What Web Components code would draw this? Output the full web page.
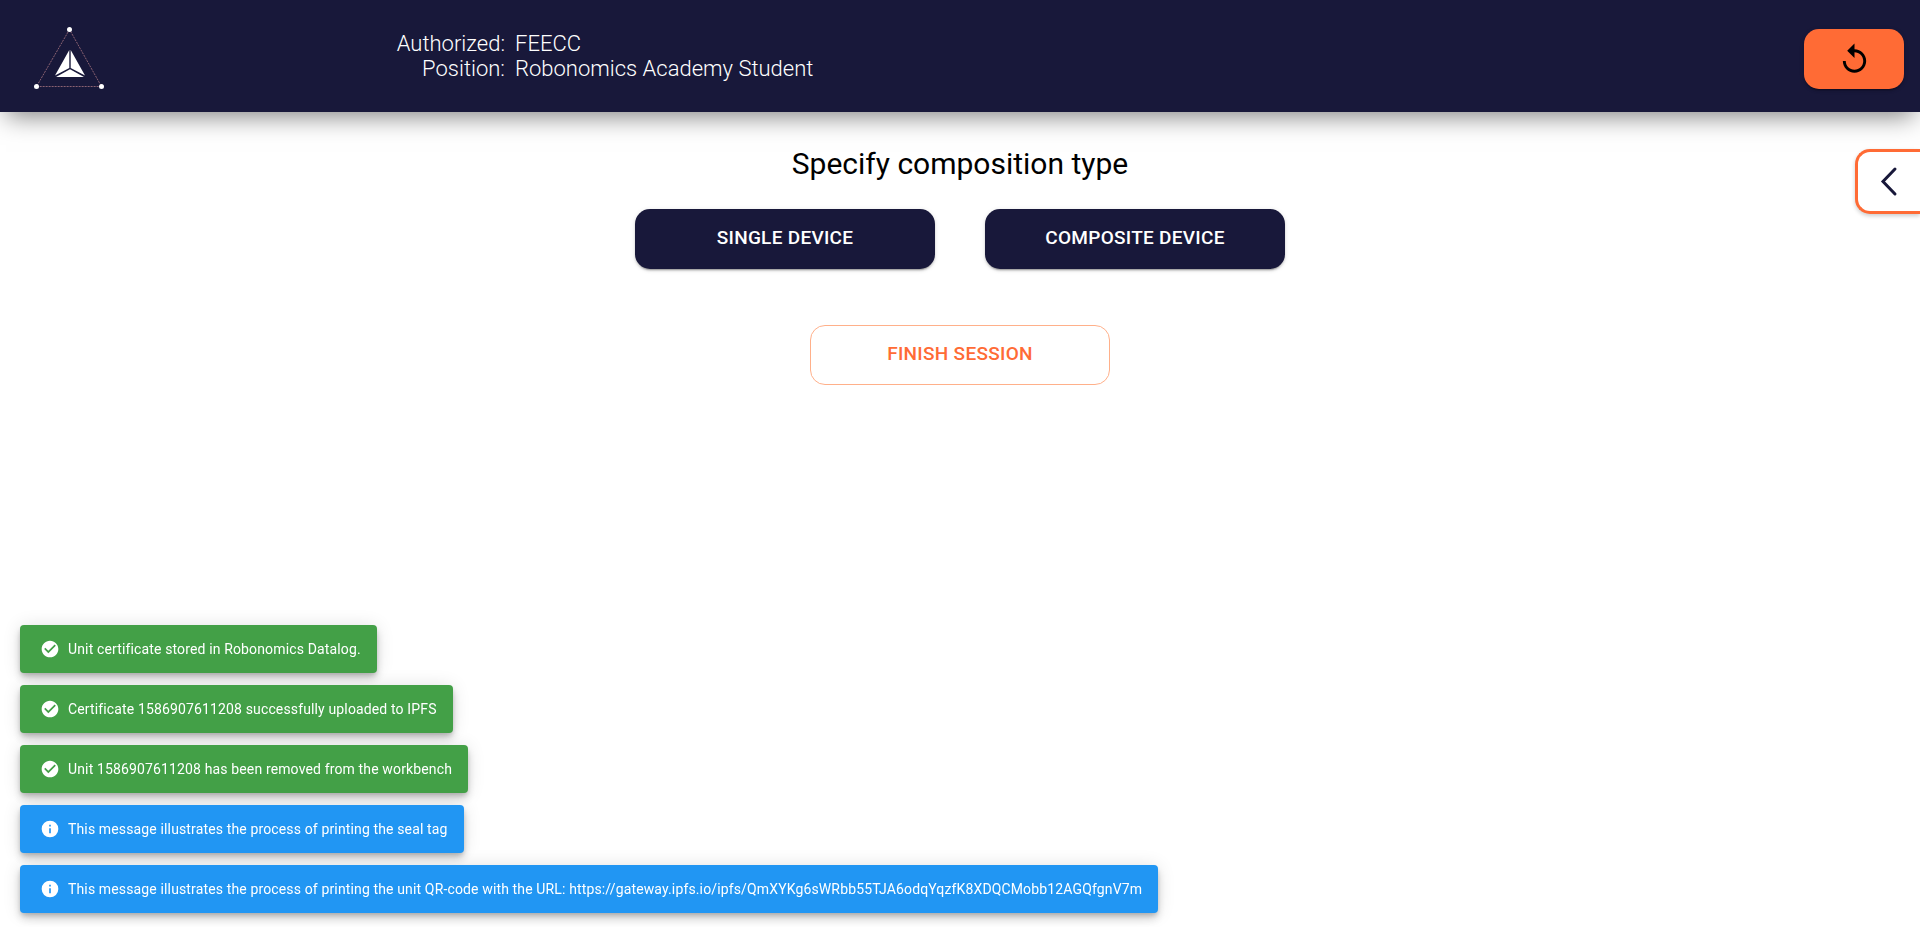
<!DOCTYPE html>
<html lang="en">
<head>
<meta charset="utf-8">
<title>Feecc Workbench</title>
<style>
  html, body { margin: 0; min-height: 100%; }
  body { background: #fff; color: #000; font-family: Roboto, "Liberation Sans", sans-serif; }
</style>
</head>
<body>
<feecc-app></feecc-app>

<template id="app-tpl">
  <style>
    :host { display: block; min-height: 100vh; --navy: #18183a; --orange: #ff6b35; }
    main { display: flex; flex-direction: column; align-items: center; padding-top: 34px; }
    h1 { margin: 0 0 28px; font-size: 30px; line-height: 35px; font-weight: 400; }
    .choices { display: flex; flex-wrap: wrap; justify-content: center; gap: 50px; margin-bottom: 56px; }
    .toasts { position: fixed; left: 20px; bottom: 14px; display: flex; flex-direction: column; align-items: flex-start; gap: 12px; }
    drawer-tab { position: absolute; right: 0; top: 149px; }
  </style>
  <app-header>
    <user-field label="Authorized:">FEECC</user-field>
    <user-field label="Position:">Robonomics Academy Student</user-field>
  </app-header>
  <main>
    <h1>Specify composition type</h1>
    <div class="choices">
      <action-button>Single device</action-button>
      <action-button>Composite device</action-button>
    </div>
    <action-button variant="outlined">Finish session</action-button>
  </main>
  <drawer-tab></drawer-tab>
  <div class="toasts">
    <toast-message kind="success">Unit certificate stored in Robonomics Datalog.</toast-message>
    <toast-message kind="success">Certificate 1586907611208 successfully uploaded to IPFS</toast-message>
    <toast-message kind="success">Unit 1586907611208 has been removed from the workbench</toast-message>
    <toast-message kind="info">This message illustrates the process of printing the seal tag</toast-message>
    <toast-message kind="info">This message illustrates the process of printing the unit QR-code with the URL: https://gateway.ipfs.io/ipfs/QmXYKg6sWRbb55TJA6odqYqzfK8XDQCMobb12AGQfgnV7m</toast-message>
  </div>
</template>

<template id="header-tpl">
  <style>
    :host { display: grid; grid-template-columns: 364px 1fr auto; align-items: center; height: 112px; box-sizing: border-box; padding: 0 16px 0 32px; background: var(--navy); color: #fff; box-shadow: 0 10px 24px -6px rgba(0,0,0,.5); }
    svg { display: block; }
    dl { margin: 0; display: grid; gap: 0; }
    button { width: 100px; height: 60px; margin-top: 6px; border: 0; border-radius: 15px; padding: 0; background: var(--orange); color: #000; display: grid; place-items: center; box-shadow: 0 3px 1px -2px rgba(0,0,0,.2), 0 2px 2px rgba(0,0,0,.14), 0 1px 5px rgba(0,0,0,.12); }
  </style>
  <svg width="76" height="68" viewBox="0 0 76 68" role="img" aria-label="Robonomics">
    <path d="M37.500 7.500 4.500 64.500H69.500Z" fill="none" stroke="#8b6272" stroke-width="1" stroke-dasharray="2 1"/>
    <g fill="#fff"><circle cx="37.500" cy="7.500" r="2.500"/><circle cx="4.500" cy="64.500" r="2.500"/><circle cx="69.500" cy="64.500" r="2.500"/>
    <path d="M37.300 28V46L23 53.500ZM38.700 28V46L53 53.500ZM38 47.300 52 55H24Z"/></g>
  </svg>
  <dl><slot></slot></dl>
  <button type="button" aria-label="Restart">
    <svg width="35" height="35" viewBox="0 0 24 24" fill="currentColor"><path d="M12 5V1L7 6l5 5V7c3.310 0 6 2.690 6 6s-2.690 6-6 6-6-2.690-6-6H4c0 4.420 3.580 8 8 8s8-3.580 8-8-3.580-8-8-8z"/></svg>
  </button>
</template>

<template id="field-tpl">
  <style>
    :host { display: grid; grid-template-columns: 109px 1fr; column-gap: 10px; font-size: 22px; line-height: 25px; font-weight: 300; }
    dt { text-align: right; }
    dd { margin: 0; }
  </style>
  <dt></dt><dd><slot></slot></dd>
</template>

<template id="button-tpl">
  <style>
    :host { display: block; }
    button { width: 300px; height: 60px; box-sizing: border-box; border: 0; border-radius: 15px; padding: 0 0 2px; font: 500 19px/32px Roboto, "Liberation Sans", sans-serif; letter-spacing: 0.015em; text-transform: uppercase; background: var(--navy); color: #fff; box-shadow: 0 3px 1px -2px rgba(0,0,0,.2), 0 2px 2px rgba(0,0,0,.14), 0 1px 5px rgba(0,0,0,.12); }
    :host([variant="outlined"]) button { background: transparent; color: var(--orange); border: 1px solid #ffb08a; box-shadow: none; }
  </style>
  <button type="button"><slot></slot></button>
</template>

<template id="tab-tpl">
  <style>
    :host { display: block; }
    button { display: grid; place-items: center; width: 65px; height: 65px; box-sizing: border-box; border: 3px solid var(--orange); border-right: 0; border-radius: 15px 0 0 15px; padding: 0; background: #fff; color: var(--navy); box-shadow: 0 2px 4px rgba(0,0,0,.2); }
  </style>
  <button type="button" aria-label="Open panel">
    <svg width="20" height="32" viewBox="0 0 20 32" fill="none" stroke="currentColor" stroke-width="3" stroke-linecap="round"><path d="M16 3 4 15.500 16 28"/></svg>
  </button>
</template>

<template id="toast-tpl">
  <style>
    :host { display: flex; align-items: center; gap: 8px; box-sizing: border-box; min-height: 48px; padding: 6px 16px 6px 20px; border-radius: 4px; background: #43a047; color: #fff; font-size: 14px; line-height: 20px; letter-spacing: 0.01em; box-shadow: 0 3px 5px -1px rgba(0,0,0,.2), 0 6px 10px rgba(0,0,0,.14), 0 1px 18px rgba(0,0,0,.12); }
    :host([kind="info"]) { background: #2196f3; }
    svg { flex: none; fill: currentColor; }
  </style>
  <svg width="20" height="20" viewBox="0 0 24 24" aria-hidden="true"><path/></svg>
  <span role="status"><slot></slot></span>
</template>

<script>
  const TOAST_ICONS = {
    success: "M12 2C6.500 2 2 6.500 2 12S6.500 22 12 22 22 17.500 22 12 17.500 2 12 2M10 17L5 12L6.410 10.590L10 14.170L17.590 6.580L19 8L10 17Z",
    info: "M13 9H11V7H13M13 17H11V11H13M12 2A10 10 0 0 0 2 12A10 10 0 0 0 12 22A10 10 0 0 0 22 12A10 10 0 0 0 12 2Z"
  };

  class TemplateElement extends HTMLElement {
    constructor() {
      super();
      const tpl = document.getElementById(this.constructor.template);
      this.attachShadow({ mode: "open" }).append(document.importNode(tpl.content, true));
    }
  }

  class AppHeader extends TemplateElement { static template = "header-tpl"; }
  class ActionButton extends TemplateElement { static template = "button-tpl"; }
  class DrawerTab extends TemplateElement { static template = "tab-tpl"; }
  class FeeccApp extends TemplateElement { static template = "app-tpl"; }

  class UserField extends TemplateElement {
    static template = "field-tpl";
    connectedCallback() {
      this.shadowRoot.querySelector("dt").textContent = this.getAttribute("label");
    }
  }

  class ToastMessage extends TemplateElement {
    static template = "toast-tpl";
    connectedCallback() {
      this.shadowRoot.querySelector("path").setAttribute("d", TOAST_ICONS[this.getAttribute("kind")]);
    }
  }

  customElements.define("app-header", AppHeader);
  customElements.define("user-field", UserField);
  customElements.define("action-button", ActionButton);
  customElements.define("drawer-tab", DrawerTab);
  customElements.define("toast-message", ToastMessage);
  customElements.define("feecc-app", FeeccApp);
</script>
</body>
</html>
